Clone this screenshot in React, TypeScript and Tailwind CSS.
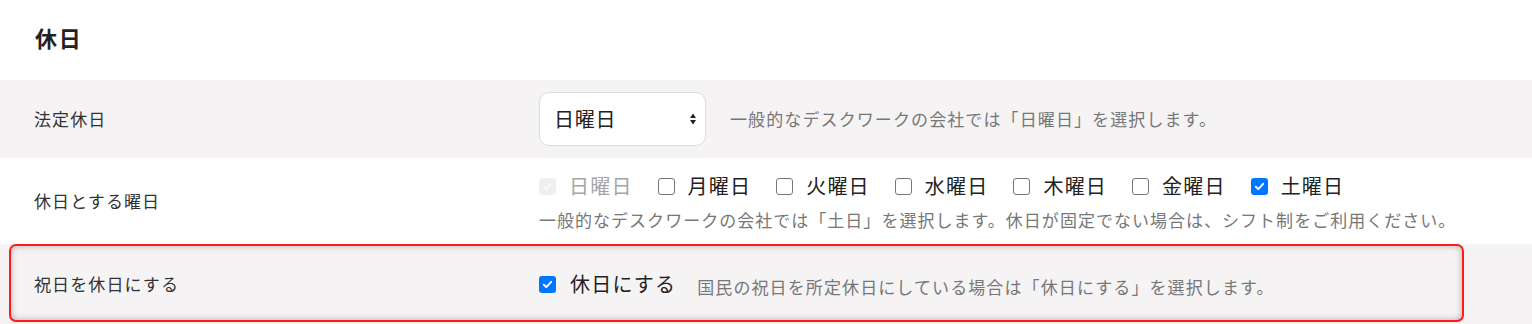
import React from "react";

const font = "font-['Noto_Sans_CJK_JP','Noto_Sans',sans-serif]";

function Check({ state }: { state: "on" | "off" | "disabled" }) {
  if (state === "disabled") {
    return (
      <span className="flex h-[17px] w-[17px] shrink-0 items-center justify-center rounded-[3px] bg-[#efefef]">
        <svg viewBox="0 0 16 16" className="h-[13px] w-[13px]">
          <path d="M3.5 8.3l3 3 6-6.6" fill="none" stroke="#fafafa" strokeWidth="2.4" strokeLinecap="round" strokeLinejoin="round" />
        </svg>
      </span>
    );
  }
  if (state === "on") {
    return (
      <span className="flex h-[17px] w-[17px] shrink-0 items-center justify-center rounded-[3px] bg-[#0075ff]">
        <svg viewBox="0 0 16 16" className="h-[13px] w-[13px]">
          <path d="M3.5 8.3l3 3 6-6.6" fill="none" stroke="#ffffff" strokeWidth="2.4" strokeLinecap="round" strokeLinejoin="round" />
        </svg>
      </span>
    );
  }
  return <span className="block h-[17px] w-[17px] shrink-0 rounded-[3px] border-[1.5px] border-[#767676] bg-white" />;
}

const days: { name: string; state: "on" | "off" | "disabled" }[] = [
  { name: "日曜日", state: "disabled" },
  { name: "月曜日", state: "off" },
  { name: "火曜日", state: "off" },
  { name: "水曜日", state: "off" },
  { name: "木曜日", state: "off" },
  { name: "金曜日", state: "off" },
  { name: "土曜日", state: "on" },
];

export default function App() {
  return (
    <div className={`${font} w-[1532px] h-[324px] overflow-hidden bg-white tracking-[0.05em] text-[#333]`}>
      <div className="h-[80px] pl-[35px] pt-[22px]">
        <h2 className="text-[22px] font-bold leading-[30px] tracking-[0.08em] text-[#222]">休日</h2>
      </div>

      {/* Row 1 */}
      <div className="flex h-[78px] items-center bg-[#f5f3f3]">
        <div className="w-[539px] shrink-0 pl-[34px] text-[17px] leading-[26px] tracking-[0.065em] text-[#333]">法定休日</div>
        <div className="flex items-center">
          <div className="flex h-[54px] w-[167px] items-center justify-between rounded-[10px] border border-[#dcdcdc] bg-white pl-[14px] pr-[8px]">
            <span className="text-[20px] leading-[28px] text-[#222]">日曜日</span>
            <svg viewBox="0 0 8 14" className="h-[14px] w-[8px]">
              <path d="M4 1.5L7 6H1z" fill="#222" />
              <path d="M4 12.5L7 8H1z" fill="#222" />
            </svg>
          </div>
          <span className="ml-[24px] text-[17px] leading-[26px] tracking-[0.065em] text-[#777]">
            一般的なデスクワークの会社では「日曜日」を選択します。
          </span>
        </div>
      </div>

      {/* Row 2 */}
      <div className="flex h-[86px] items-center bg-white">
        <div className="w-[539px] shrink-0 pl-[34px] text-[17px] leading-[26px] tracking-[0.065em] text-[#333]">休日とする曜日</div>
        <div className="flex flex-col gap-[6px] pt-[2px]">
          <div className="flex items-center gap-[25px]">
            {days.map((d) => (
              <label key={d.name} className="flex items-center gap-[13px]">
                <Check state={d.state} />
                <span
                  className={`text-[20px] leading-[30px] tracking-[0.06em] ${d.state === "disabled" ? "text-[#a5a5a5]" : "text-[#222]"}`}
                >
                  {d.name}
                </span>
              </label>
            ))}
          </div>
          <div className="text-[17px] leading-[26px] tracking-[0.06em] text-[#777]">
            一般的なデスクワークの会社では「土日」を選択します。休日が固定でない場合は、シフト制をご利用ください。
          </div>
        </div>
      </div>

      {/* Row 3 */}
      <div className="relative flex h-[80px] items-center bg-[#f5f3f3]">
        <div className="w-[539px] shrink-0 pl-[34px] text-[17px] leading-[26px] tracking-[0.065em] text-[#333]">祝日を休日にする</div>
        <div className="flex items-center">
          <label className="flex items-center gap-[14px]">
            <Check state="on" />
            <span className="text-[20px] leading-[30px] tracking-[0.06em] text-[#222]">休日にする</span>
          </label>
          <span className="ml-[21px] mt-[6px] text-[17px] leading-[26px] tracking-[0.065em] text-[#777]">
            国民の祝日を所定休日にしている場合は「休日にする」を選択します。
          </span>
        </div>
        <div className="pointer-events-none absolute left-[9px] top-0 h-[78px] w-[1455px] rounded-[7px] border-2 border-[#ff1a1a] shadow-[inset_0_0_7px_rgba(0,0,0,0.28)]" />
      </div>
    </div>
  );
}
